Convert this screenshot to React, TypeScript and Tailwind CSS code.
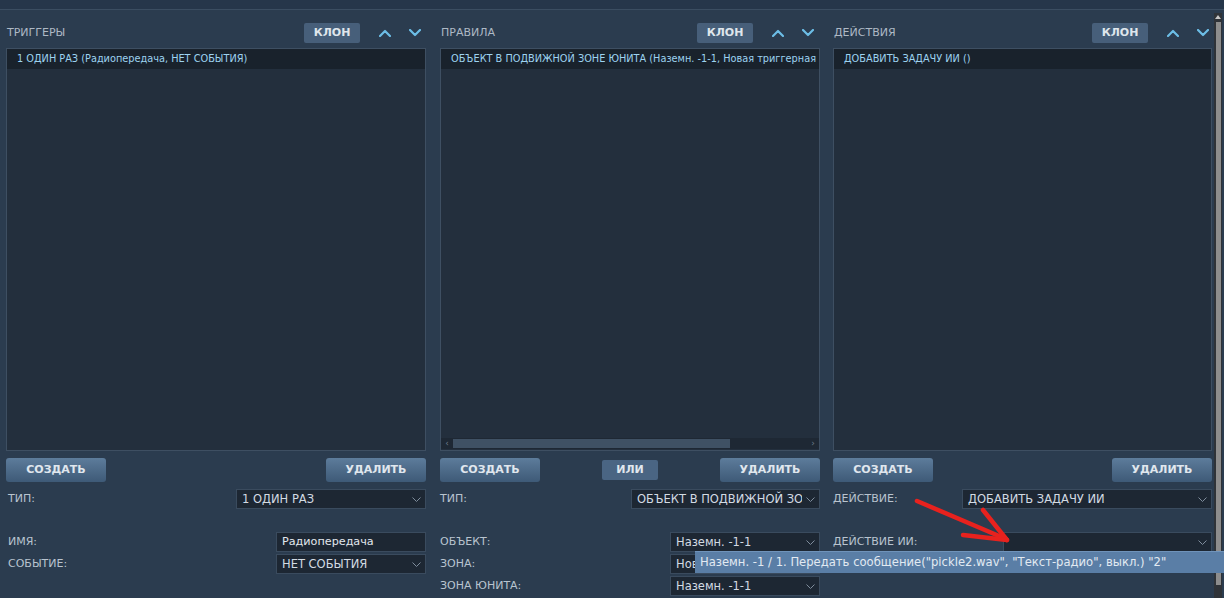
import React from "react";

const Chevron = ({ up }: { up?: boolean }) => (
  <svg width="12" height="8" viewBox="0 0 12 8" className="block">
    <polyline
      points={up ? "1,7 6,2 11,7" : "1,1 6,6 11,1"}
      fill="none"
      stroke="#6cbde6"
      strokeWidth="2.2"
      strokeLinecap="round"
      strokeLinejoin="round"
    />
  </svg>
);

const SmallV = () => (
  <svg width="9" height="5" viewBox="0 0 9 5" className="block">
    <polyline points="0.5,0.5 4.5,4.5 8.5,0.5" fill="none" stroke="#7f8d9c" strokeWidth="1" />
  </svg>
);

const Select = ({ text, w, empty }: { text?: string; w: string; empty?: boolean }) => (
  <div className={`${w} h-[20px] flex items-center border border-[#3a4b5e] bg-[#1d2733] pl-[5px] pr-[4px]`}>
    <span className="flex-1 min-w-0 overflow-hidden whitespace-nowrap text-[11.5px] leading-[18px] text-[#d3dbe3]">
      {empty ? "" : text}
    </span>
    <span className="ml-[4px] shrink-0">
      <SmallV />
    </span>
  </div>
);

const Input = ({ text, w }: { text: string; w: string }) => (
  <div className={`${w} h-[20px] flex items-center border border-[#3a4b5e] bg-[#1d2733] pl-[5px]`}>
    <span className="text-[11.2px] leading-[18px] text-[#e2e8ee] whitespace-nowrap">{text}</span>
  </div>
);

const BigBtn = ({ label }: { label: string }) => (
  <div className="w-[100px] h-[24px] rounded-[3px] bg-gradient-to-b from-[#5d7c9b] to-[#3e5a77] flex items-center justify-center pt-[1px] text-[11px] font-bold text-[#e0e7ee]">
    {label}
  </div>
);

const Label = ({ children }: { children: React.ReactNode }) => (
  <span className="text-[11px] text-[#b9c4cf] whitespace-nowrap">{children}</span>
);

const Header = ({ title, pr }: { title: string; pr: string }) => (
  <div className={`h-[20px] flex items-center ${pr}`}>
    <span className="flex-1 pl-[1px] text-[11px] text-[#aeb9c5]">{title}</span>
    <div className="w-[56px] h-[20px] rounded-[2px] bg-[#475f7a] flex items-center justify-center text-[11px] font-bold text-[#dfe6ec]">
      КЛОН
    </div>
    <div className="ml-[19px]">
      <Chevron up />
    </div>
    <div className="ml-[18px]">
      <Chevron />
    </div>
  </div>
);

const ListBox = ({ item, hscroll }: { item: string; hscroll?: boolean }) => (
  <div className="mt-[5px] h-[403px] border border-[#3e4f62] bg-[#232f3d] flex flex-col overflow-hidden">
    <div className="h-[20px] bg-[#19222c] flex items-center pl-[10px] whitespace-nowrap overflow-hidden">
      <span className="text-[9.75px] text-[#9dd3f0]">{item}</span>
    </div>
    <div className="flex-1" />
    {hscroll && (
      <div className="h-[11px] mb-[1px] bg-[#1e2834] flex items-center">
        <span className="w-[12px] text-center text-[9px] leading-[11px] text-[#6d7b89]">‹</span>
        <div className="w-[277px] h-[9px] bg-[#3f5164]" />
        <div className="flex-1" />
        <span className="w-[12px] text-center text-[9px] leading-[11px] text-[#6d7b89]">›</span>
      </div>
    )}
  </div>
);

export default function App() {
  return (
    <div className="relative w-[1224px] h-[598px] overflow-hidden bg-[#2b3c4f] font-['DejaVu_Sans',sans-serif]">
      <div className="h-[10px] bg-[#26364a] border-b border-[#3b4d61]" />
      <div className="flex">
        {/* Column 1 */}
        <div className="ml-[6px] w-[420px] pt-[13px] flex flex-col">
          <Header title="ТРИГГЕРЫ" pr="pr-[5px]" />
          <ListBox item="1 ОДИН РАЗ (Радиопередача, НЕТ СОБЫТИЯ)" />
          <div className="mt-[7px] flex justify-between">
            <BigBtn label="СОЗДАТЬ" />
            <BigBtn label="УДАЛИТЬ" />
          </div>
          <div className="mt-[7px] h-[20px] flex items-center justify-between pl-[2px]">
            <Label>ТИП:</Label>
            <Select text="1 ОДИН РАЗ" w="w-[190px]" />
          </div>
          <div className="mt-[23px] flex flex-col gap-[2px]">
            <div className="h-[20px] flex items-center justify-between pl-[2px]">
              <Label>ИМЯ:</Label>
              <Input text="Радиопередача" w="w-[150px]" />
            </div>
            <div className="h-[20px] flex items-center justify-between pl-[2px]">
              <Label>СОБЫТИЕ:</Label>
              <Select text="НЕТ СОБЫТИЯ" w="w-[150px]" />
            </div>
          </div>
        </div>

        {/* Column 2 */}
        <div className="ml-[14px] w-[380px] pt-[13px] flex flex-col">
          <Header title="ПРАВИЛА" pr="pr-[6px]" />
          <ListBox item="ОБЪЕКТ В ПОДВИЖНОЙ ЗОНЕ ЮНИТА (Наземн. -1-1, Новая триггерная зона)" hscroll />
          <div className="mt-[7px] flex justify-between items-center">
            <BigBtn label="СОЗДАТЬ" />
            <div className="w-[56px] h-[20px] rounded-[2px] bg-[#4a6583] flex items-center justify-center text-[11px] font-bold text-[#e0e7ee]">
              ИЛИ
            </div>
            <BigBtn label="УДАЛИТЬ" />
          </div>
          <div className="mt-[7px] h-[20px] flex items-center justify-between">
            <Label>ТИП:</Label>
            <Select text="ОБЪЕКТ В ПОДВИЖНОЙ ЗОНЕ ЮНИТА" w="w-[189px]" />
          </div>
          <div className="mt-[23px] flex flex-col gap-[2px]">
            <div className="h-[20px] flex items-center justify-between">
              <Label>ОБЪЕКТ:</Label>
              <Select text="Наземн. -1-1" w="w-[150px]" />
            </div>
            <div className="h-[20px] flex items-center justify-between">
              <Label>ЗОНА:</Label>
              <Select text="Новая триггерная зона" w="w-[150px]" />
            </div>
            <div className="h-[20px] flex items-center justify-between">
              <Label>ЗОНА ЮНИТА:</Label>
              <Select text="Наземн. -1-1" w="w-[150px]" />
            </div>
          </div>
        </div>

        {/* Column 3 */}
        <div className="ml-[13px] w-[379px] pt-[13px] flex flex-col">
          <Header title="ДЕЙСТВИЯ" pr="pr-[3px]" />
          <ListBox item="ДОБАВИТЬ ЗАДАЧУ ИИ ()" />
          <div className="mt-[7px] flex justify-between">
            <BigBtn label="СОЗДАТЬ" />
            <BigBtn label="УДАЛИТЬ" />
          </div>
          <div className="mt-[7px] h-[20px] flex items-center justify-between">
            <Label>ДЕЙСТВИЕ:</Label>
            <Select text="ДОБАВИТЬ ЗАДАЧУ ИИ" w="w-[250px]" />
          </div>
          <div className="mt-[23px] flex flex-col gap-[2px]">
            <div className="h-[20px] flex items-center justify-between">
              <Label>ДЕЙСТВИЕ ИИ:</Label>
              <Select empty w="w-[209px]" />
            </div>
          </div>
        </div>

        {/* Window scrollbar */}
        <div className="ml-[2px] mt-[3px] w-[8px] h-[585px] bg-[#2f3338] flex flex-col items-center">
          <div className="mt-[2px] w-0 h-0 border-l-[3px] border-r-[3px] border-b-[4px] border-l-transparent border-r-transparent border-b-[#c8c8c8]" />
          <div className="mt-[3px] w-[5px] h-[563px] bg-[#8d8d8d]" />
        </div>
      </div>

      {/* Dropdown popup */}
      <div className="absolute left-[695px] top-[551px] right-0 h-[22px] bg-[#5a7ea6] border-t border-[#6f93ba] flex items-center pl-[5px] whitespace-nowrap">
        <span className="text-[11.6px] text-[#e2eaf2]">
          Наземн. -1 / 1. Передать сообщение("pickle2.wav", "Текст-радио", выкл.) "2"
        </span>
      </div>

      {/* Red annotation arrow */}
      <svg className="absolute left-0 top-0 pointer-events-none" width="1224" height="598">
        <g stroke="#e8221e" strokeWidth="4.5" strokeLinecap="round" fill="none">
          <line x1="917" y1="501" x2="1006" y2="539" />
          <line x1="983" y1="510" x2="1007" y2="540" />
          <line x1="963" y1="535" x2="1007" y2="540" />
        </g>
      </svg>
    </div>
  );
}
